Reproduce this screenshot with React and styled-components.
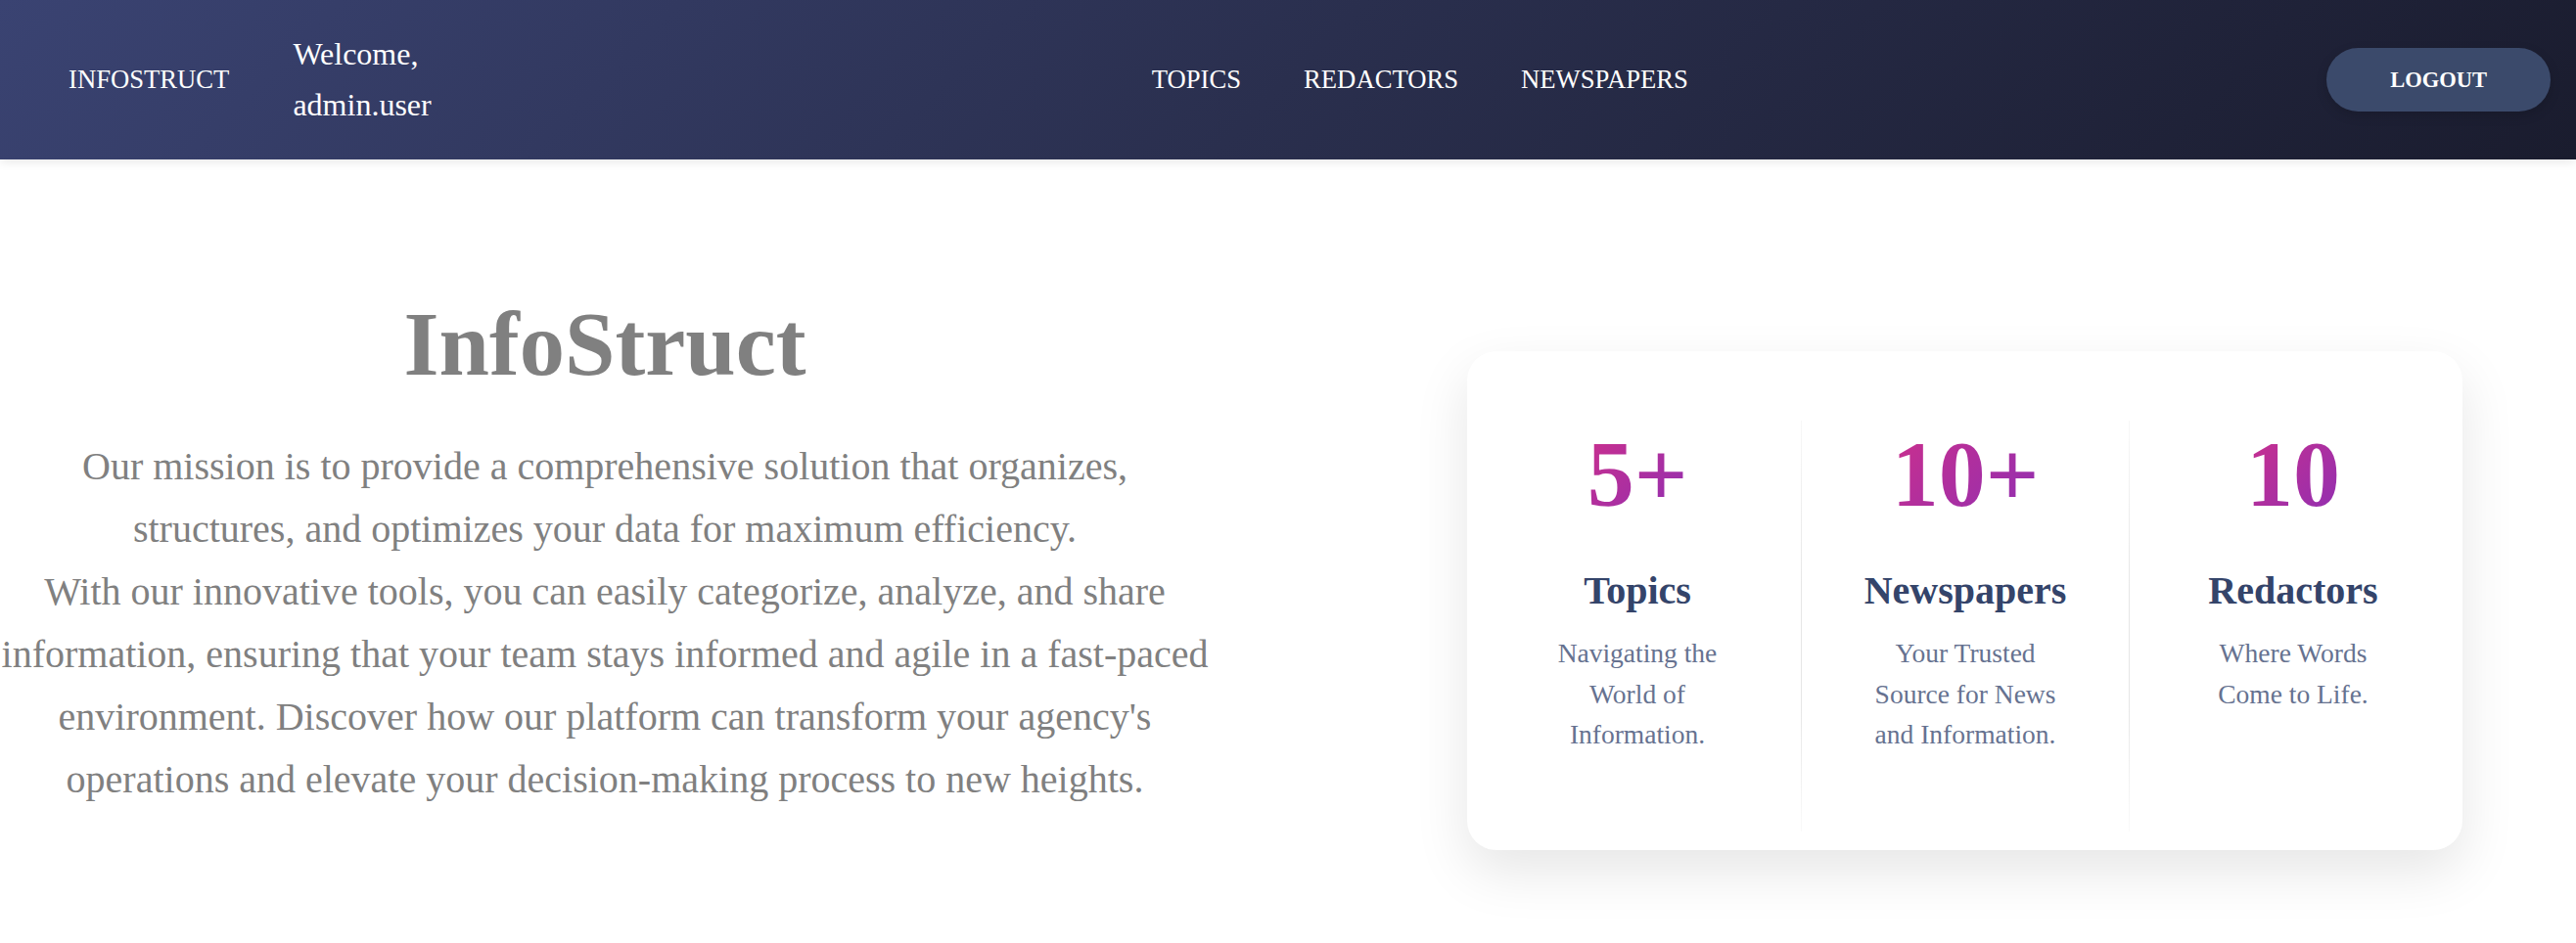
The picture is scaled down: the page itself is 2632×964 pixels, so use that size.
import React from 'react';
import styled, { createGlobalStyle } from 'styled-components';

const GlobalStyle = createGlobalStyle`
  html, body {
    margin: 0;
    padding: 0;
    background: #ffffff;
  }
  body {
    font-family: 'Liberation Serif', 'Times New Roman', serif;
  }
  * {
    box-sizing: border-box;
  }
`;

const Header = styled.header`
  height: 163px;
  display: flex;
  align-items: center;
  padding: 0 26px 0 70px;
  background: linear-gradient(135deg, #3a4372 0%, #2a2f4e 50%, #1a1c2e 100%);
  box-shadow: 0 2px 10px rgba(0, 0, 0, 0.1);
  color: #ffffff;
  line-height: 1.6;
`;

const Brand = styled.div`
  font-size: 26.67px;
`;

const Welcome = styled.div`
  margin-left: 65px;
  font-size: 32px;
  line-height: 51.5px;
`;

const Nav = styled.nav`
  display: flex;
  gap: 64px;
  margin-left: 736px;
`;

const NavLink = styled.a`
  color: #ffffff;
  font-size: 26.67px;
  text-decoration: none;
`;

const LogoutButton = styled.button`
  margin-left: auto;
  height: 65px;
  padding: 0 65px;
  border: none;
  border-radius: 40px;
  background: #3b4a6b;
  color: #ffffff;
  font-family: 'Liberation Serif', 'Times New Roman', serif;
  font-weight: 700;
  font-size: 22.5px;
  box-shadow: 0 4px 12px rgba(0, 0, 0, 0.15);
`;

const Hero = styled.main`
  display: flex;
  align-items: flex-start;
  min-height: 801px;
`;

const Intro = styled.section`
  width: 1236px;
  margin-top: 134px;
  text-align: center;
  color: #808080;
`;

const Title = styled.h1`
  margin: 0 0 37px;
  font-size: 92.5px;
  line-height: 1.2;
  font-weight: 700;
`;

const Mission = styled.p`
  margin: 0;
  font-size: 40px;
  line-height: 64px;
`;

const StatsCard = styled.section`
  width: 1017px;
  margin: 196px 0 0 263px;
  padding: 71px 6px 19px;
  display: grid;
  grid-template-columns: repeat(3, 1fr);
  background: #ffffff;
  border-radius: 30px;
  box-shadow: 0 22px 55px rgba(0, 0, 0, 0.1);
`;

const Stat = styled.div`
  display: flex;
  flex-direction: column;
  align-items: center;
  padding-top: 7px;
  min-height: 420px;
  text-align: center;
  border-left: 1px solid transparent;
  border-image: ${({ $divided }) =>
    $divided
      ? 'linear-gradient(to bottom, rgba(230,230,230,0.3), #e6e6e6 40%, #e6e6e6 70%, rgba(230,230,230,0.2)) 1'
      : 'none'};
`;

const Count = styled.div`
  font-size: 96px;
  line-height: 96px;
  font-weight: 700;
  background: linear-gradient(135deg, #cc2f8c 0%, #8e2fb3 100%);
  -webkit-background-clip: text;
  background-clip: text;
  color: transparent;
`;

const StatTitle = styled.h3`
  margin: 47px 0 0;
  font-size: 40px;
  line-height: 48px;
  font-weight: 700;
  color: #34446a;
`;

const StatText = styled.p`
  margin: 19px 0 0;
  max-width: 210px;
  font-size: 27.5px;
  line-height: 41.7px;
  color: #667290;
`;

const stats = [
  { count: '5+', title: 'Topics', text: 'Navigating the World of Information.' },
  { count: '10+', title: 'Newspapers', text: 'Your Trusted Source for News and Information.' },
  { count: '10', title: 'Redactors', text: 'Where Words Come to Life.' },
];

export default function App() {
  return (
    <>
      <GlobalStyle />
      <Header>
        <Brand>INFOSTRUCT</Brand>
        <Welcome>
          Welcome,
          <br />
          admin.user
        </Welcome>
        <Nav>
          <NavLink href="#">TOPICS</NavLink>
          <NavLink href="#">REDACTORS</NavLink>
          <NavLink href="#">NEWSPAPERS</NavLink>
        </Nav>
        <LogoutButton>LOGOUT</LogoutButton>
      </Header>
      <Hero>
        <Intro>
          <Title>InfoStruct</Title>
          <Mission>
            Our mission is to provide a comprehensive solution that organizes, structures, and
            optimizes your data for maximum efficiency.
            <br />
            With our innovative tools, you can easily categorize, analyze, and share information,
            ensuring that your team stays informed and agile in a fast-paced environment. Discover
            how our platform can transform your agency's operations and elevate your
            decision-making process to new heights.
          </Mission>
        </Intro>
        <StatsCard>
          {stats.map((s, i) => (
            <Stat key={s.title} $divided={i > 0}>
              <Count>{s.count}</Count>
              <StatTitle>{s.title}</StatTitle>
              <StatText>{s.text}</StatText>
            </Stat>
          ))}
        </StatsCard>
      </Hero>
    </>
  );
}
